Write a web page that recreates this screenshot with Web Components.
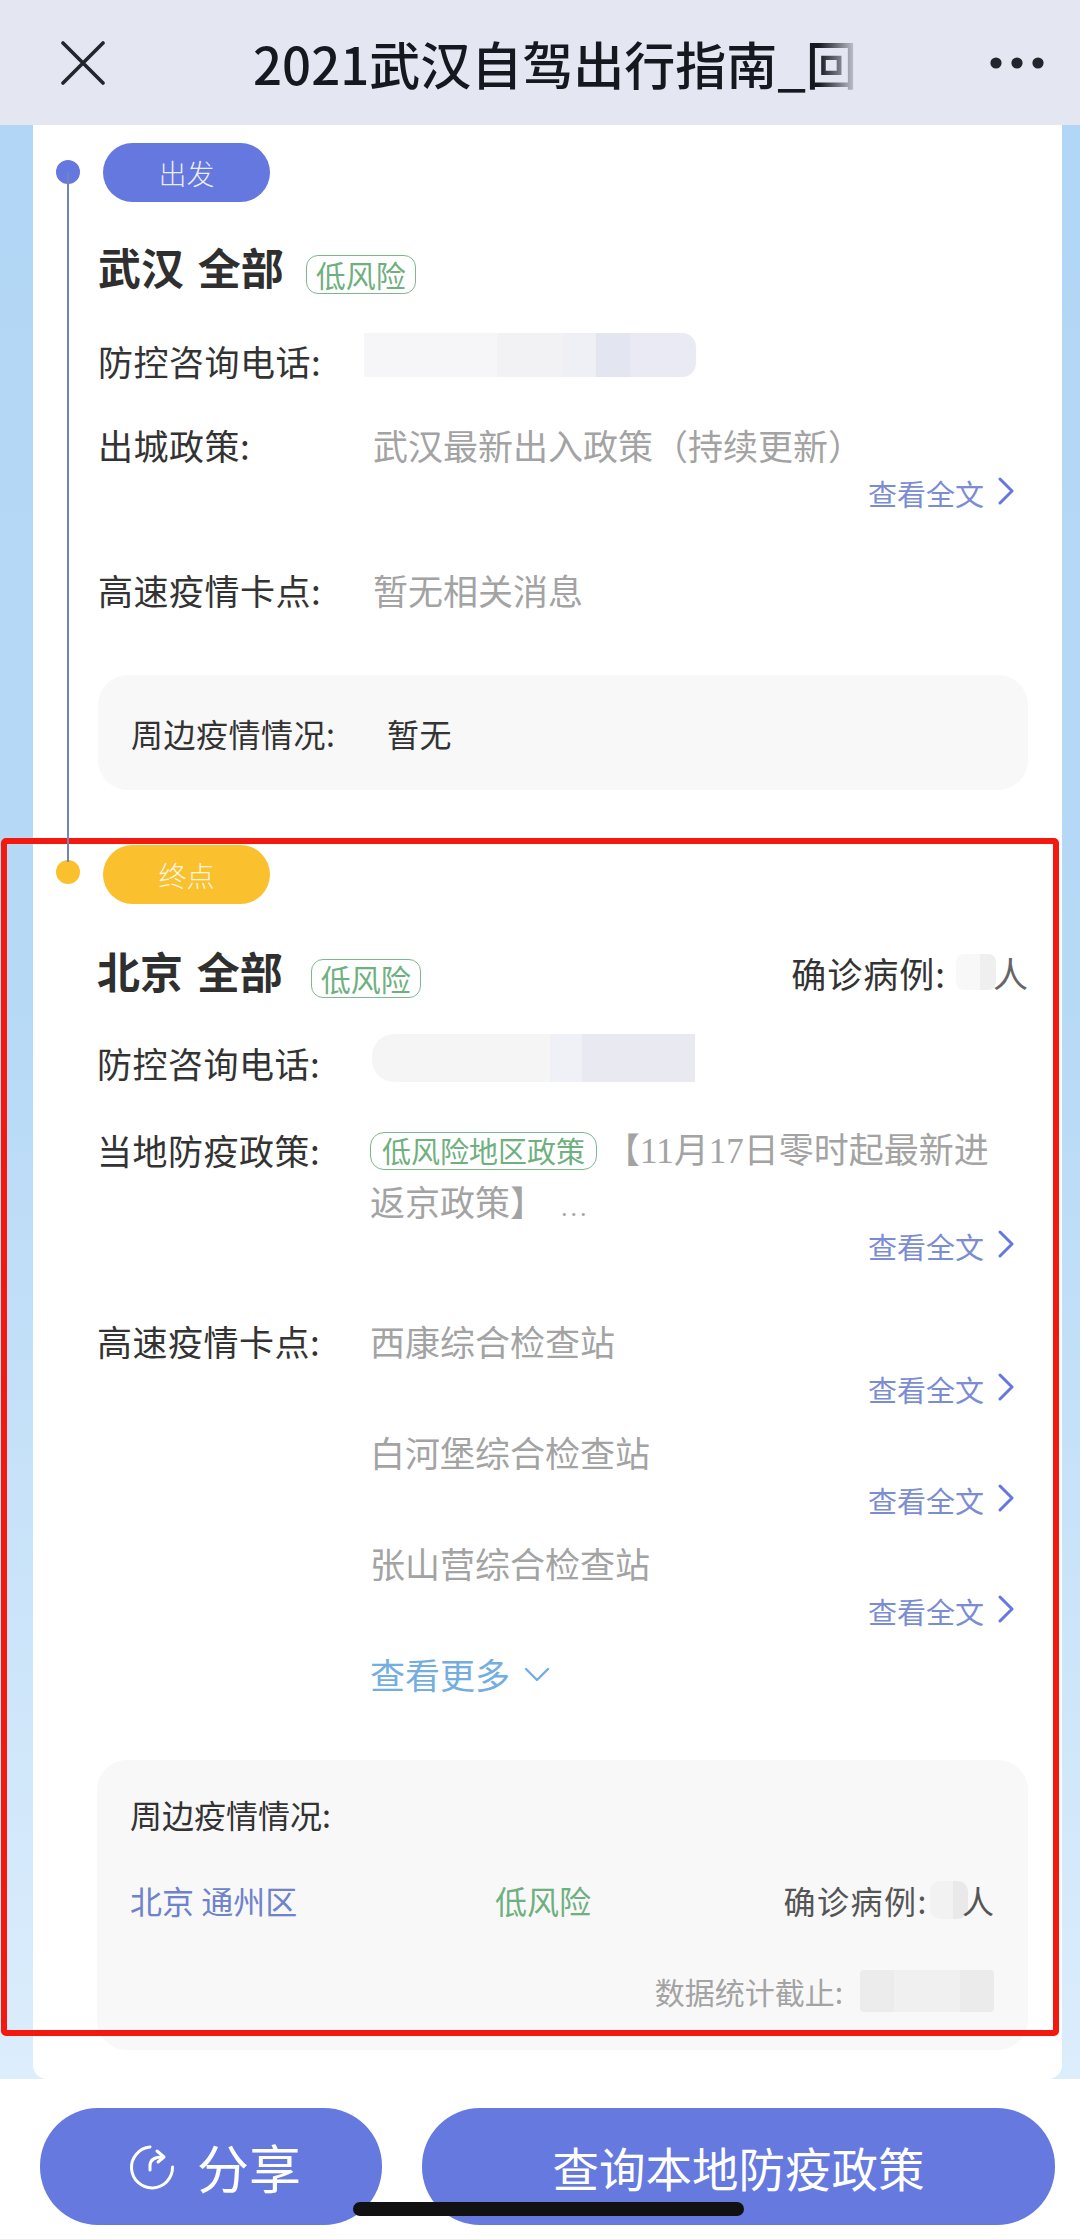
<!DOCTYPE html>
<html lang="zh">
<head>
<meta charset="utf-8">
<title>2021武汉自驾出行指南</title>
<style>
  html, body { margin: 0; padding: 0; }
  body {
    width: 1080px;
    height: 2240px;
    overflow: hidden;
    background: #fff;
    font-family: "Noto Sans CJK SC", "Noto Sans", sans-serif;
  }
</style>
</head>
<body>
<guide-page>
  <nav-bar slot="nav">2021武汉自驾出行指南_回</nav-bar>

  <stop-section kind="start" label="出发">
    <stop-heading name="武汉 全部" top="36"></stop-heading>
    <info-row label="防控咨询电话:" gap="37"><blur-patch variant="phone-a"></blur-patch></info-row>
    <info-row label="出城政策:" gap="32">
      武汉最新出入政策（持续更新）
      <read-more></read-more>
    </info-row>
    <info-row label="高速疫情卡点:" gap="51">暂无相关消息</info-row>
    <nearby-box style="height:115px;margin-top:59px;">
      <div style="display:flex;align-items:center;height:115px;font-size:32px;letter-spacing:.5px;color:#333;">
        <span style="width:256px;">周边疫情情况:</span><span>暂无</span>
      </div>
    </nearby-box>
  </stop-section>

  <stop-section kind="end" label="终点">
    <stop-heading name="北京 全部" badge-gap="28">
      <span slot="extra" style="display:flex;align-items:center;letter-spacing:1px;">确诊病例:<blur-patch variant="count"></blur-patch><span style="color:#666;margin-left:-3px;letter-spacing:0;">人</span></span>
    </stop-heading>
    <info-row label="防控咨询电话:" gap="35" col="273"><blur-patch variant="phone-b"></blur-patch></info-row>
    <info-row label="当地防疫政策:" gap="35" col="273">
      <policy-text></policy-text>
      <read-more pull="-8"></read-more>
    </info-row>
    <info-row label="高速疫情卡点:" gap="49" col="273">
      <checkpoint-list>
        <checkpoint-item>西康综合检查站</checkpoint-item>
        <checkpoint-item>白河堡综合检查站</checkpoint-item>
        <checkpoint-item>张山营综合检查站</checkpoint-item>
        <more-link></more-link>
      </checkpoint-list>
    </info-row>
    <nearby-box style="height:290px;margin-top:60px;">
      <nearby-detail></nearby-detail>
    </nearby-box>
  </stop-section>

  <bottom-bar slot="bar"></bottom-bar>
  <red-frame slot="overlay"></red-frame>
</guide-page>

<script>
// Page shell
class GuidePage extends HTMLElement {
  constructor() {
    super();
    this.attachShadow({ mode: 'open' }).innerHTML = `
    <style>
      :host { display: flex; flex-direction: column; position: relative; width: 1080px; height: 2240px; overflow: hidden; }
      .body {
        height: 1954px;
        padding: 0 18px 0 33px;
        box-sizing: border-box;
        background: linear-gradient(#b2d6f5, #b6d9f6 45%, #dcedfc);
      }
      .card { height: 100%; background: #fff; border-radius: 0 0 14px 14px; overflow: hidden; }
    </style>
    <slot name="nav"></slot>
    <div class="body"><div class="card"><slot></slot></div></div>
    <slot name="bar"></slot>
    <slot name="overlay"></slot>`;
  }
}
customElements.define('guide-page', GuidePage);

// Top navigation
class NavBar extends HTMLElement {
  constructor() {
    super();
    this.attachShadow({ mode: 'open' }).innerHTML = `
    <style>
      :host { display: flex; align-items: center; height: 125px; flex: none; background: #e4e6f2; color: #16181f; }
      .close { width: 44px; height: 44px; margin-left: 61px; flex: none; }
      .title {
        margin-left: 148px;
        width: 615px;
        font-size: 51px;
        font-weight: 500;
        line-height: 70px;
        white-space: nowrap;
        overflow: hidden;
        -webkit-mask-image: linear-gradient(90deg, #000 92%, transparent 99%);
        mask-image: linear-gradient(90deg, #000 92%, transparent 99%);
      }
      .dots { width: 54px; height: 12px; margin-left: 122px; flex: none; }
    </style>
    <svg class="close" viewBox="0 0 44 44" fill="none" stroke="#23252c" stroke-width="3.6" stroke-linecap="round"><path d="M2 2 L42 42 M42 2 L2 42"/></svg>
    <div class="title"><slot></slot></div>
    <svg class="dots" viewBox="0 0 54 12" fill="#23252c"><circle cx="6" cy="6" r="5.6"/><circle cx="27" cy="6" r="5.6"/><circle cx="48" cy="6" r="5.6"/></svg>`;
  }
}
customElements.define('nav-bar', NavBar);

// One stop of the route: dot, line, pill and its rows
class StopSection extends HTMLElement {
  constructor() {
    super();
    const start = this.getAttribute('kind') === 'start';
    const color = start ? '#6478e0' : '#fbc02d';
    this.attachShadow({ mode: 'open' }).innerHTML = `
    <style>
      :host { display: block; position: relative; padding: ${start ? 18 : 55}px 34px 0 ${start ? 65 : 64}px; font-size: 35px; color: #333; }
      .pill {
        width: 167px; height: 59px; margin-left: ${start ? 5 : 6}px;
        border-radius: 30px;
        background: ${color};
        color: rgba(255,255,255,.88);
        font-size: 28px;
        font-weight: 300;
        display: flex; align-items: center; justify-content: center;
      }
      .dot { position: absolute; left: 23px; top: ${start ? 35 : 70}px; width: 24px; height: 24px; border-radius: 50%; background: ${color}; }
      .line { position: absolute; left: 33.5px; top: 47px; bottom: -72px; width: 2px; background: #7283bd; display: ${start ? 'block' : 'none'}; z-index: 1; }
    </style>
    <div class="line"></div>
    <div class="dot"></div>
    <div class="pill">${this.getAttribute('label')}</div>
    <slot></slot>`;
  }
}
customElements.define('stop-section', StopSection);

class StopHeading extends HTMLElement {
  constructor() {
    super();
    const gap = this.getAttribute('badge-gap') || 22;
    this.attachShadow({ mode: 'open' }).innerHTML = `
    <style>
      :host { display: flex; align-items: center; height: 60px; margin-top: ${this.getAttribute('top') || 38}px; }
      .name { font-size: 43px; font-weight: 700; color: #2f2f2f; white-space: nowrap; word-spacing: 4px; margin-bottom: 4px; }
      .extra { margin-left: auto; font-size: 35px; color: #333; }
      risk-badge { margin-left: ${gap}px; margin-top: 12px; }
    </style>
    <span class="name">${this.getAttribute('name')}</span>
    <risk-badge>低风险</risk-badge>
    <span class="extra"><slot name="extra"></slot></span>`;
  }
}
customElements.define('stop-heading', StopHeading);

class RiskBadge extends HTMLElement {
  constructor() {
    super();
    this.attachShadow({ mode: 'open' }).innerHTML = `
    <style>
      :host {
        display: inline-flex; align-items: center; justify-content: center;
        height: 37px; padding: 0 9px;
        border: 1px solid #7db88c; border-radius: 12px;
        color: #6fb07f; font-size: 30px; line-height: 37px; font-weight: 400;
        white-space: nowrap; box-sizing: content-box;
      }
    </style>
    <slot></slot>`;
  }
}
customElements.define('risk-badge', RiskBadge);

class InfoRow extends HTMLElement {
  constructor() {
    super();
    const gap = this.getAttribute('gap') || 36;
    const col = this.getAttribute('col') || 275;
    this.attachShadow({ mode: 'open' }).innerHTML = `
    <style>
      :host { display: grid; grid-template-columns: ${col}px 1fr; margin-top: ${gap}px; line-height: 52px; }
      .label { color: #333; white-space: nowrap; letter-spacing: .5px; }
      .value { color: #a3a3a3; }
    </style>
    <div class="label">${this.getAttribute('label')}</div>
    <div class="value"><slot></slot></div>`;
  }
}
customElements.define('info-row', InfoRow);

class ReadMore extends HTMLElement {
  constructor() {
    super();
    const pull = this.getAttribute('pull') || 2;
    this.attachShadow({ mode: 'open' }).innerHTML = `
    <style>
      :host { display: flex; justify-content: flex-end; align-items: center; height: 40px; margin-top: ${pull}px; padding-right: 14px; font-size: 29px; line-height: 40px; color: #7b8dd2; }
      svg { width: 16px; height: 28px; margin-left: 14px; margin-top: -4px; }
    </style>
    <span>查看全文</span>
    <svg viewBox="0 0 16 28" fill="none" stroke="#6478e0" stroke-width="3" stroke-linecap="round" stroke-linejoin="round"><path d="M2 2 L14 14 L2 26"/></svg>`;
  }
}
customElements.define('read-more', ReadMore);

class PolicyText extends HTMLElement {
  constructor() {
    super();
    this.attachShadow({ mode: 'open' }).innerHTML = `
    <style>
      :host { display: block; padding-top: 1px; line-height: 53px; color: #a3a3a3; font-family: "Liberation Serif", "Noto Sans CJK SC", serif; }
      .tag { display: inline-block; height: 36px; line-height: 35px; padding: 0 11px; margin-right: 8px; border: 1px solid #7db88c; border-radius: 14px; color: #6fb07f; font-size: 29px; vertical-align: 0; font-family: "Noto Sans CJK SC", sans-serif; }
      .dots { font-size: 26px; letter-spacing: 3px; margin-left: 16px; }
    </style>
    <span class="tag">低风险地区政策</span>【11月17日零时起最新进<br>返京政策】<span class="dots">...</span>`;
  }
}
customElements.define('policy-text', PolicyText);

class CheckpointList extends HTMLElement {
  constructor() {
    super();
    this.attachShadow({ mode: 'open' }).innerHTML = `
    <style>:host { display: flex; flex-direction: column; gap: 17px; }</style>
    <slot></slot>`;
  }
}
customElements.define('checkpoint-list', CheckpointList);

class CheckpointItem extends HTMLElement {
  constructor() {
    super();
    this.attachShadow({ mode: 'open' }).innerHTML = `
    <style>:host { display: block; color: #a3a3a3; }</style>
    <div><slot></slot></div>
    <read-more></read-more>`;
  }
}
customElements.define('checkpoint-item', CheckpointItem);

class MoreLink extends HTMLElement {
  constructor() {
    super();
    this.attachShadow({ mode: 'open' }).innerHTML = `
    <style>
      :host { display: flex; align-items: center; color: #74aee0; line-height: 52px; }
      svg { width: 26px; height: 15px; margin-left: 14px; }
    </style>
    <span>查看更多</span>
    <svg viewBox="0 0 26 15" fill="none" stroke="#74aee0" stroke-width="2.4" stroke-linecap="round" stroke-linejoin="round"><path d="M2 2 L13 13 L24 2"/></svg>`;
  }
}
customElements.define('more-link', MoreLink);

class NearbyBox extends HTMLElement {
  constructor() {
    super();
    this.attachShadow({ mode: 'open' }).innerHTML = `
    <style>
      :host { display: block; box-sizing: border-box; padding: 0 34px 0 33px; background: #f8f8f8; border-radius: 30px; }
    </style>
    <slot></slot>`;
  }
}
customElements.define('nearby-box', NearbyBox);

class NearbyDetail extends HTMLElement {
  constructor() {
    super();
    this.attachShadow({ mode: 'open' }).innerHTML = `
    <style>
      :host { display: block; padding-top: 28px; font-size: 32px; line-height: 52px; color: #333; }
      .row { display: grid; grid-template-columns: 365px 1fr auto; margin-top: 34px; }
      .city { color: #6f82cc; }
      .risk { color: #6fb07f; }
      .cases { display: flex; align-items: center; color: #555; letter-spacing: 1.5px; }
      .cases span { margin-left: -6px; letter-spacing: 0; }
      .stats { display: flex; justify-content: flex-end; align-items: center; margin-top: 39px; color: #a3a3a3; font-size: 30px; }
    </style>
    <div>周边疫情情况:</div>
    <div class="row">
      <span class="city">北京 通州区</span>
      <span class="risk">低风险</span>
      <div class="cases">确诊病例:<blur-patch variant="count-small"></blur-patch><span>人</span></div>
    </div>
    <div class="stats">数据统计截止:<blur-patch variant="date"></blur-patch></div>`;
  }
}
customElements.define('nearby-detail', NearbyDetail);

// Redacted values in the screenshot
const PATCHES = {
  'phone-a': 'width:332px;height:44px;margin:-2px 0 0 -9px;background:linear-gradient(90deg,#f6f6f8 0 40%,#f2f2f4 40% 60%,#eef0f6 60% 70%,#e3e5f0 70% 80%,#e9eaf3 80% 100%);border-radius:2px 14px 14px 2px;',
  'phone-b': 'width:323px;height:48px;margin:-3px 0 0 2px;background:linear-gradient(90deg,#f5f5f6 0 55%,#f0f1f7 55% 65%,#e8e9f1 65% 100%);border-radius:22px 0 0 22px;',
  'count': 'width:40px;height:36px;margin-left:10px;background:linear-gradient(90deg,#f8f8f8 0 60%,#efefef 60%);border-radius:8px;',
  'count-small': 'width:38px;height:38px;margin-left:2px;background:linear-gradient(90deg,#f2f2f2 0 60%,#e9e9e9 60%);border-radius:10px;',
  'date': 'width:134px;height:42px;margin-left:17px;background:linear-gradient(90deg,#ececec 0 25%,#f0f0f0 25% 75%,#ebebeb 75%);border-radius:4px;'
};
class BlurPatch extends HTMLElement {
  constructor() {
    super();
    const css = PATCHES[this.getAttribute('variant')] || '';
    this.attachShadow({ mode: 'open' }).innerHTML = `
    <style>:host { display: block; flex: none; ${css} }</style>`;
  }
}
customElements.define('blur-patch', BlurPatch);

// Bottom buttons
class BottomBar extends HTMLElement {
  constructor() {
    super();
    this.attachShadow({ mode: 'open' }).innerHTML = `
    <style>
      :host { display: flex; position: relative; height: 161px; box-sizing: border-box; padding: 29px 25px 0 40px; gap: 40px; background: #fff; border-bottom: 1px solid #eee; }
      .btn { height: 117px; border-radius: 58px; background: #6679de; color: #fff; display: flex; align-items: center; justify-content: center; box-sizing: border-box; }
      .share { width: 342px; font-size: 52px; padding-left: 8px; }
      .share svg { width: 46px; height: 46px; margin-right: 22px; }
      .query { flex: 1; font-size: 46.5px; }
      .home { position: absolute; left: 353px; top: 123px; width: 391px; height: 14px; border-radius: 7px; background: #111; }
    </style>
    <div class="btn share">
      <svg viewBox="0 0 46 46" fill="none" stroke="#fff" stroke-width="3" stroke-linecap="round" stroke-linejoin="round">
        <path d="M21 3 A20.5 20.5 0 1 0 43.5 23"/>
        <path d="M21 26 V22 Q21 13 33 13"/>
        <path d="M28 7 L35 13 L29 18"/>
      </svg>
      <span>分享</span>
    </div>
    <div class="btn query">查询本地防疫政策</div>
    <div class="home"></div>`;
  }
}
customElements.define('bottom-bar', BottomBar);

// Red annotation drawn over the screenshot
class RedFrame extends HTMLElement {
  constructor() {
    super();
    this.attachShadow({ mode: 'open' }).innerHTML = `
    <style>
      :host { position: absolute; left: 1px; top: 838px; width: 1058px; height: 1198px; box-sizing: border-box; border: 6px solid #f5180e; border-radius: 5px; pointer-events: none; }
    </style>`;
  }
}
customElements.define('red-frame', RedFrame);
</script>
</body>
</html>
